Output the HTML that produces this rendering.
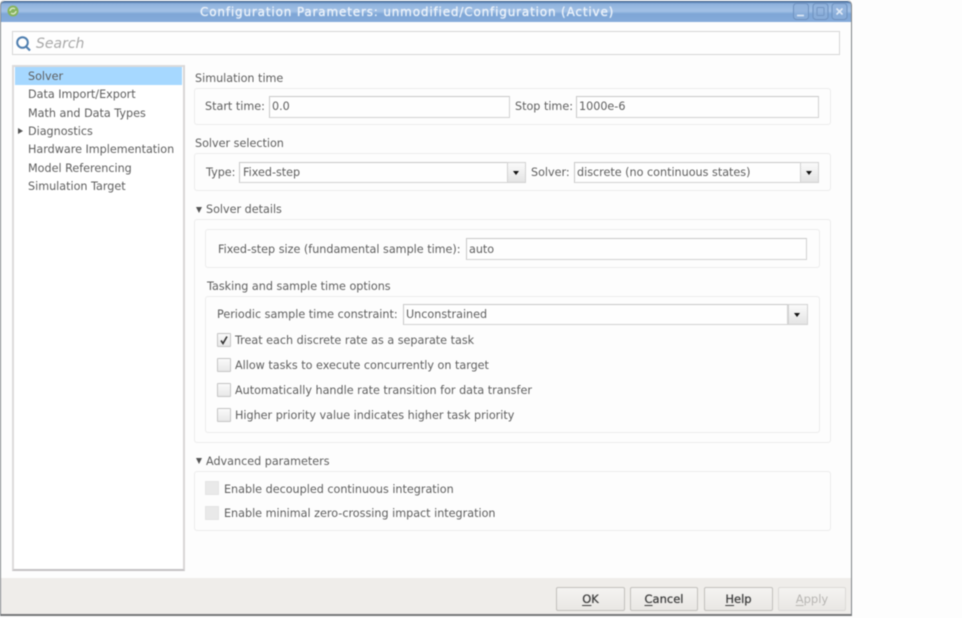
<!DOCTYPE html>
<html><head><meta charset="utf-8">
<style>
html,body{margin:0;padding:0;background:#fdfdfd;}
body{width:962px;height:618px;position:relative;overflow:hidden;font-family:"DejaVu Sans",sans-serif;font-size:11.18px;color:#5e5e5e;}
div{position:absolute;box-sizing:border-box;}
#w{left:0;top:0;width:962px;height:618px;filter:blur(.45px);}
.t{white-space:nowrap;line-height:14px;height:14px;}
.g{border:1px solid #ececec;border-radius:3px;}
.i{background:#fefefe;border:1px solid #d2d2d2;border-top-color:#c8c8c8;border-left-color:#c8c8c8;}
.d{background:linear-gradient(#fafafa,#e4e4e4);border:1px solid #d2d2d2;}
.d:after{content:"";position:absolute;left:5px;top:8px;border:3.5px solid transparent;border-top:4px solid #111;border-bottom:0;}
.c{width:14px;height:14px;background:linear-gradient(#fafafa,#e8e8e8);border:1px solid #c4c4c4;border-radius:1px;}
.x{width:14px;height:14px;background:#e9e9e9;border:1px solid #e4e4e4;}
.b{top:587px;height:24px;border:1px solid #c2c0bd;border-radius:2px;background:linear-gradient(#f4f3f1,#e9e7e4);text-align:center;line-height:23px;color:#3c3c3c;font-size:11.5px;text-shadow:0 0 .6px #444;}
u{text-underline-offset:2px;}
.a{width:0;height:0;border-left:3.5px solid transparent;border-right:3.5px solid transparent;border-top:6px solid #555;}
</style></head><body>
<div id="w">
<div style="left:0;top:0;width:852px;height:616px;background:#fdfdfd;border:1px solid #7d8286;border-top:0;border-bottom:2px solid #77787a;border-radius:5px 5px 0 0;"></div>
<div style="left:1px;top:1px;width:850px;height:21px;background:linear-gradient(#5d86b8 0,#8fb2dc 10%,#a3c1e6 45%,#7ea6d6 60%,#86abda 100%);border-radius:4px 4px 0 0;border-top:1px solid #3e5f88;"></div>
<svg style="position:absolute;left:6px;top:4px" width="14" height="14" viewBox="0 0 14 14"><circle cx="7" cy="7" r="5.5" fill="#86b45e"/><path d="M4 7a3 3 0 0 1 5-2M10 7a3 3 0 0 1-5 2" fill="none" stroke="#d8e8c4" stroke-width="1.4"/></svg>
<div class="t" style="left:200px;top:5px;color:#eef4fb;font-size:12px;letter-spacing:.83px;text-shadow:0 0 1px #e8f0fa;">Configuration Parameters: unmodified/Configuration (Active)</div>
<svg style="position:absolute;left:793px;top:2px" width="56" height="19" viewBox="0 0 56 19"><g fill="#8fb0da" fill-opacity=".6" stroke="#6f92bf"><rect x=".5" y="1.5" width="15" height="16" rx="3"/><rect x="20" y="1.5" width="15" height="16" rx="3"/><rect x="39" y="1.5" width="15" height="16" rx="3"/></g><path d="M4 13.5h7" stroke="#dfe9f6" stroke-width="1.6"/><rect x="24" y="5.5" width="7" height="8" rx="1" fill="none" stroke="#7496c2"/><path d="M43.5 6.5l6 6M49.5 6.5l-6 6" stroke="#dfe9f6" stroke-width="1.6"/></svg>

<div style="left:1px;top:578px;width:850px;height:36px;background:#efedea;"></div>

<div class="i" style="left:12px;top:31px;width:828px;height:24px;border-color:#d6d6d6;background:#fefefe;"></div>
<svg style="position:absolute;left:15px;top:35px" width="17" height="17" viewBox="0 0 17 17"><circle cx="7.5" cy="7.5" r="5.3" fill="none" stroke="#4f7fb0" stroke-width="2"/><path d="M11 11.5l4 4" stroke="#4f7fb0" stroke-width="2.2"/></svg>
<div class="t" style="left:36px;top:36px;font-size:14px;height:16px;line-height:16px;font-style:italic;color:#a9a9a9;">Search</div>

<div style="left:12px;top:65px;width:173px;height:506px;background:#fff;border:2px solid #dcdada;border-bottom-color:#c4c1c3;border-right-color:#d8d6d6;"></div>
<div style="left:15px;top:67px;width:167px;height:18px;background:#a6d8ff;"></div>
<div class="t" style="left:28px;top:70px;">Solver</div>
<div class="t" style="left:28px;top:88px;">Data Import/Export</div>
<div class="t" style="left:28px;top:107px;">Math and Data Types</div>
<div class="t" style="left:28px;top:125px;">Diagnostics</div>
<div style="left:18px;top:128px;width:0;height:0;border-top:3.5px solid transparent;border-bottom:3.5px solid transparent;border-left:5px solid #555;"></div>
<div class="t" style="left:28px;top:143px;">Hardware Implementation</div>
<div class="t" style="left:28px;top:162px;">Model Referencing</div>
<div class="t" style="left:28px;top:180px;">Simulation Target</div>

<div class="t" style="left:195px;top:72px;">Simulation time</div>
<div class="g" style="left:194px;top:88px;width:637px;height:37px;"></div>
<div class="t" style="left:205px;top:100px;">Start time:</div>
<div class="i" style="left:269px;top:96px;width:241px;height:22px;"></div>
<div class="t" style="left:272px;top:100px;">0.0</div>
<div class="t" style="left:515px;top:100px;">Stop time:</div>
<div class="i" style="left:576px;top:96px;width:243px;height:22px;"></div>
<div class="t" style="left:579px;top:100px;">1000e-6</div>

<div class="t" style="left:195px;top:137px;">Solver selection</div>
<div class="g" style="left:194px;top:153px;width:637px;height:38px;"></div>
<div class="t" style="left:206px;top:166px;">Type:</div>
<div class="i" style="left:239px;top:162px;width:269px;height:21px;"></div>
<div class="t" style="left:243px;top:166px;">Fixed-step</div>
<div class="d" style="left:507px;top:162px;width:19px;height:21px;"></div>
<div class="t" style="left:531px;top:166px;">Solver:</div>
<div class="i" style="left:574px;top:162px;width:227px;height:21px;"></div>
<div class="t" style="left:577px;top:166px;">discrete (no continuous states)</div>
<div class="d" style="left:800px;top:162px;width:19px;height:21px;"></div>

<div class="a" style="left:196px;top:207px;"></div>
<div class="t" style="left:206px;top:203px;">Solver details</div>
<div class="g" style="left:194px;top:219px;width:637px;height:224px;"></div>
<div class="g" style="left:205px;top:229px;width:615px;height:39px;"></div>
<div class="t" style="left:218px;top:243px;">Fixed-step size (fundamental sample time):</div>
<div class="i" style="left:466px;top:238px;width:341px;height:22px;"></div>
<div class="t" style="left:469px;top:243px;">auto</div>

<div class="t" style="left:207px;top:280px;">Tasking and sample time options</div>
<div class="g" style="left:205px;top:296px;width:615px;height:137px;"></div>
<div class="t" style="left:217px;top:308px;">Periodic sample time constraint:</div>
<div class="i" style="left:403px;top:304px;width:385px;height:21px;"></div>
<div class="t" style="left:406px;top:308px;">Unconstrained</div>
<div class="d" style="left:788px;top:304px;width:20px;height:21px;"></div>

<div class="c" style="left:217px;top:333px;"></div>
<svg style="position:absolute;left:217px;top:333px" width="14" height="14" viewBox="0 0 14 14"><path d="M4 7.5l2 3 4-7" fill="none" stroke="#333" stroke-width="1.6"/></svg>
<div class="t" style="left:235px;top:334px;">Treat each discrete rate as a separate task</div>
<div class="c" style="left:217px;top:358px;"></div>
<div class="t" style="left:235px;top:359px;">Allow tasks to execute concurrently on target</div>
<div class="c" style="left:217px;top:383px;"></div>
<div class="t" style="left:235px;top:384px;">Automatically handle rate transition for data transfer</div>
<div class="c" style="left:217px;top:408px;"></div>
<div class="t" style="left:235px;top:409px;">Higher priority value indicates higher task priority</div>

<div class="a" style="left:196px;top:458px;"></div>
<div class="t" style="left:206px;top:455px;">Advanced parameters</div>
<div class="g" style="left:194px;top:471px;width:637px;height:60px;"></div>
<div class="x" style="left:205px;top:481px;"></div>
<div class="t" style="left:224px;top:483px;">Enable decoupled continuous integration</div>
<div class="x" style="left:205px;top:506px;"></div>
<div class="t" style="left:224px;top:507px;">Enable minimal zero-crossing impact integration</div>

<div class="b" style="left:556px;width:69px;"><u>O</u>K</div>
<div class="b" style="left:630px;width:68px;"><u>C</u>ancel</div>
<div class="b" style="left:704px;width:69px;"><u>H</u>elp</div>
<div class="b" style="left:778px;width:68px;color:#b8b6b3;border-color:#dcdad7;text-shadow:none;"><u>A</u>pply</div>
</div>
</body></html>
